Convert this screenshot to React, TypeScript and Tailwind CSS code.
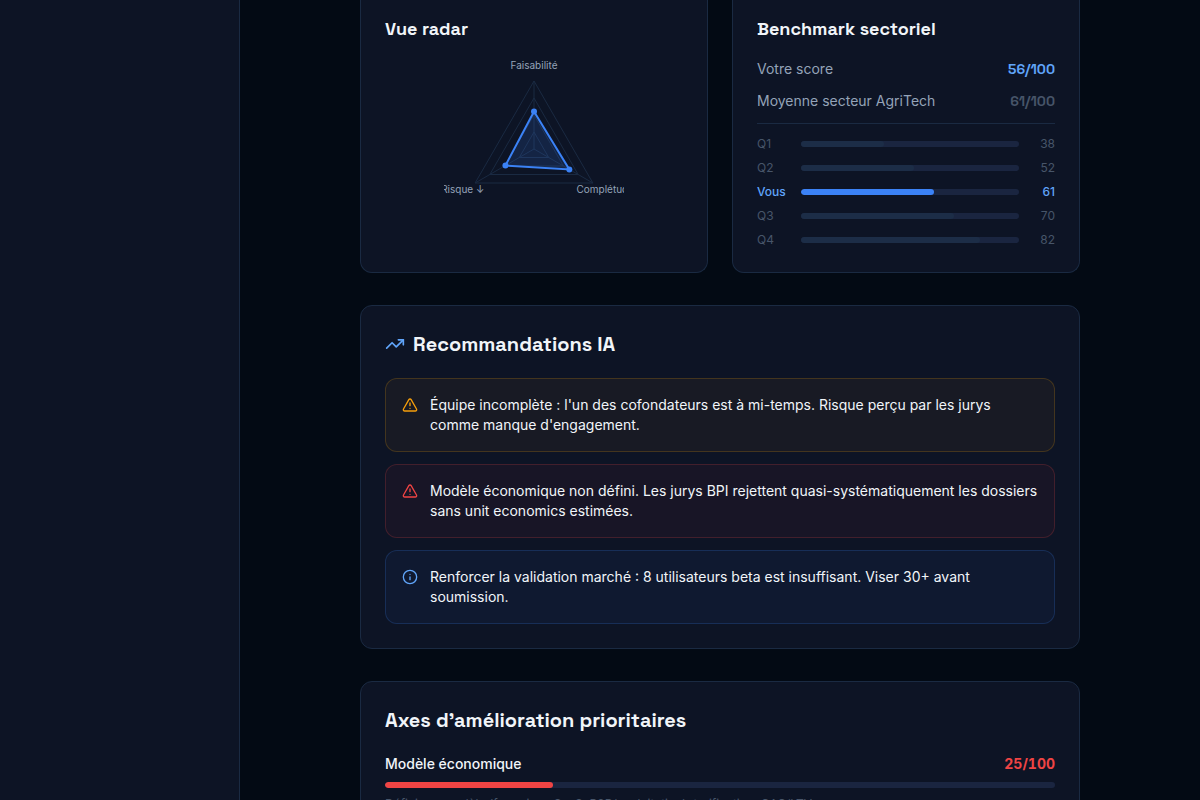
import { AlertTriangle, Info, TrendingUp } from 'lucide-react'

type Level = 'warning' | 'danger' | 'info'

const benchmark = [
  { label: 'Q1', value: 38 },
  { label: 'Q2', value: 52 },
  { label: 'Vous', value: 61, me: true },
  { label: 'Q3', value: 70 },
  { label: 'Q4', value: 82 },
]

const recommendations: { level: Level; text: string }[] = [
  {
    level: 'warning',
    text: "Équipe incomplète : l'un des cofondateurs est à mi-temps. Risque perçu par les jurys comme manque d'engagement.",
  },
  {
    level: 'danger',
    text: 'Modèle économique non défini. Les jurys BPI rejettent quasi-systématiquement les dossiers sans unit economics estimées.',
  },
  {
    level: 'info',
    text: 'Renforcer la validation marché : 8 utilisateurs beta est insuffisant. Viser 30+ avant soumission.',
  },
]

const levelStyles = {
  warning: { Icon: AlertTriangle, box: 'bg-[#f59e0b]/5 border-[#f59e0b]/20', icon: 'text-[#f59e0b]' },
  danger: { Icon: AlertTriangle, box: 'bg-[#ef4444]/5 border-[#ef4444]/20', icon: 'text-[#ef4444]' },
  info: { Icon: Info, box: 'bg-[#3b82f6]/5 border-[#3b82f6]/20', icon: 'text-[#60a5fa]' },
}

const CENTER = 90
const RADIUS = 68

// ratios dans l'ordre haut, droite, gauche
function points(ratios: number[]) {
  return ratios.map((r, i) => {
    const angle = (i * 2 * Math.PI) / 3 - Math.PI / 2
    return [CENTER + RADIUS * r * Math.cos(angle), CENTER + RADIUS * r * Math.sin(angle)]
  })
}

function Radar() {
  const data = points([0.55, 0.6, 0.485])
  return (
    <svg width="180" height="180" viewBox="0 0 180 180" className="mx-auto block overflow-hidden">
      {[0.25, 0.5, 0.75, 1].map((r) => (
        <polygon key={r} points={points([r, r, r]).join(' ')} fill="none" stroke="#1a2a42" strokeWidth="1" />
      ))}
      {points([1, 1, 1]).map(([x, y], i) => (
        <line key={i} x1={CENTER} y1={CENTER} x2={x} y2={y} stroke="#1a2a42" strokeWidth="1" />
      ))}
      <polygon points={data.join(' ')} fill="#3b82f6" fillOpacity="0.15" stroke="#3b82f6" strokeWidth="2" />
      {data.map(([x, y], i) => (
        <circle key={i} cx={x} cy={y} r="3" fill="#3b82f6" />
      ))}
      <g fill="#94a3b8" fontSize="10" textAnchor="middle">
        <text x="90" y="10">Faisabilité</text>
        <text x="161.3" y="134">Complétude</text>
        <text x="18.7" y="134">Risque ↓</text>
      </g>
    </svg>
  )
}

export default function App() {
  return (
    <div className="flex h-[800px] overflow-hidden bg-[#030a14] font-['Inter','Liberation_Sans',sans-serif] text-sm text-[#f1f5f9]">
      <aside className="w-60 shrink-0 border-r border-[#1a2a42] bg-[#0d1425]" />

      <main className="flex-1">
        <div className="mx-auto flex w-[720px] flex-col gap-8">
          <div className="grid grid-cols-2 gap-6">
            <section className="h-[273px] rounded-b-xl border border-t-0 border-[#1a2a42] bg-[#0d1425] px-6 pt-[15px]">
              <h3 className="mb-4 font-['Space_Grotesk','Inter',sans-serif] text-lg leading-7 font-semibold">Vue radar</h3>
              <Radar />
            </section>

            <section className="h-[273px] rounded-b-xl border border-t-0 border-[#1a2a42] bg-[#0d1425] px-6 pt-[15px]">
              <h3 className="mb-4 font-['Space_Grotesk','Inter',sans-serif] text-lg leading-7 font-semibold">
                Benchmark sectoriel
              </h3>
              <div className="flex flex-col gap-3">
                <div className="flex items-center justify-between">
                  <span className="text-[#94a3b8]">Votre score</span>
                  <span className="font-['Space_Grotesk','Inter',sans-serif] font-bold text-[#60a5fa]">56/100</span>
                </div>
                <div className="flex items-center justify-between">
                  <span className="text-[#94a3b8]">Moyenne secteur AgriTech</span>
                  <span className="font-['Space_Grotesk','Inter',sans-serif] font-bold text-[#475569]">61/100</span>
                </div>
              </div>
              <div className="mt-3 flex flex-col gap-2 border-t border-[#1a2a42] pt-3">
                {benchmark.map((row) => (
                  <div
                    key={row.label}
                    className={`flex items-center gap-3 text-xs ${row.me ? 'font-medium text-[#60a5fa]' : 'text-[#475569]'}`}
                  >
                    <span className="w-8">{row.label}</span>
                    <div className="h-1.5 flex-1 overflow-hidden rounded-full bg-[#1a2540]">
                      <div
                        className={`h-full rounded-full ${row.me ? 'bg-[#3b82f6]' : 'bg-[#1c2d47]'}`}
                        style={{ width: `${row.value}%` }}
                      />
                    </div>
                    <span className="w-6 text-right">{row.value}</span>
                  </div>
                ))}
              </div>
            </section>
          </div>

          <section className="rounded-xl border border-[#1a2a42] bg-[#0d1425] p-6">
            <h2 className="mb-5 flex items-center gap-2 font-['Space_Grotesk','Inter',sans-serif] text-xl leading-7 font-semibold">
              <TrendingUp size={20} className="text-[#60a5fa]" />
              Recommandations IA
            </h2>
            <div className="flex flex-col gap-3">
              {recommendations.map(({ level, text }) => {
                const { Icon, box, icon } = levelStyles[level]
                return (
                  <div key={level} className={`flex gap-3 rounded-xl border p-4 ${box}`}>
                    <Icon size={16} className={`mt-0.5 shrink-0 ${icon}`} />
                    <p className="leading-5">{text}</p>
                  </div>
                )
              })}
            </div>
          </section>

          <section className="rounded-xl border border-[#1a2a42] bg-[#0d1425] p-6">
            <h2 className="mb-5 font-['Space_Grotesk','Inter',sans-serif] text-xl leading-7 font-semibold tracking-[-0.001em]">
              Axes d’amélioration prioritaires
            </h2>
            <div className="flex items-center justify-between">
              <span className="font-medium">Modèle économique</span>
              <span className="font-bold text-[#ef4444] tabular-nums">25/100</span>
            </div>
            <div className="mt-2 h-1.5 overflow-hidden rounded-full bg-[#1a2540]">
              <div className="h-full w-1/4 rounded-full bg-[#ef4444]" />
            </div>
            <p className="mt-2 text-xs text-[#475569]">
              Définir un modèle (freemium, SaaS, B2B/exploitation), tarification, CAC/LTV.
            </p>
          </section>
        </div>
      </main>
    </div>
  )
}
